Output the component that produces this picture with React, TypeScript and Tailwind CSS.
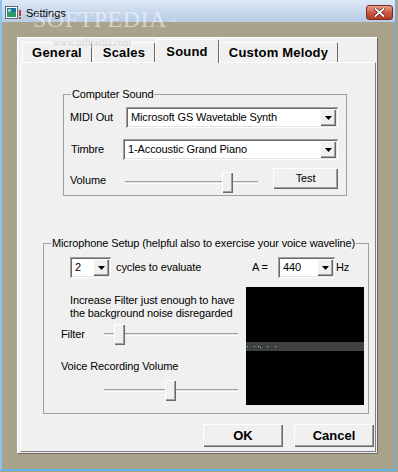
import React from 'react'

// win classic bevels
const raised = 'shadow-[inset_1px_1px_0_#ffffff,inset_-1px_-1px_0_#696969,inset_-2px_-2px_0_#a0a0a0]'
const sunken =
  'shadow-[inset_1px_1px_0_#a0a0a0,inset_-1px_-1px_0_#ffffff,inset_2px_2px_0_#696969,inset_-2px_-2px_0_#e3e3e3]'

function Combo({ value, className }: { value: string; className: string }) {
  return (
    <div className={`flex h-[21px] items-center bg-white p-[2px] ${sunken} ${className}`}>
      <span className="flex-1 truncate pl-[3px] leading-[13px]">{value}</span>
      <span className={`flex h-[17px] w-[16px] items-center justify-center bg-[#f0f0f0] ${raised}`}>
        <svg width="7" height="4" viewBox="0 0 7 4">
          <path d="M0 0h7L3.5 4z" fill="#000" />
        </svg>
      </span>
    </div>
  )
}

function Slider({ className, thumb }: { className: string; thumb: string }) {
  return (
    <div className={`relative h-[21px] ${className}`}>
      <div className="mt-[9px] h-[3px] border-t border-b border-t-[#a0a0a0] border-b-white bg-[#e3e3e3]" />
      <div className={`absolute top-0 h-[21px] w-[11px] bg-[#f0f0f0] ${raised} ${thumb}`} />
    </div>
  )
}

function Group({ label, className, children }: { label: string; className: string; children: React.ReactNode }) {
  return (
    <div className={`relative border border-[#a0a0a0] ${className}`}>
      <span className="absolute -top-[7px] left-[7px] bg-[#f0f0f0] px-[1px] leading-[13px] whitespace-nowrap">
        {label}
      </span>
      {children}
    </div>
  )
}

function Tab({ label, className, active = false }: { label: string; className: string; active?: boolean }) {
  return (
    <div
      className={`flex items-center justify-center rounded-t-[2px] border-t border-l border-r border-t-white border-l-white border-r-[#696969] bg-[#f0f0f0] text-[13px] font-bold tracking-[0.2px] ${
        active ? 'relative z-10 -mb-px h-[24px]' : 'h-[20px]'
      } ${className}`}
    >
      {label}
    </div>
  )
}

export default function App() {
  return (
    <div className="h-[472px] w-[398px] bg-[#aaa38c] font-['Liberation_Sans',Arial,sans-serif] text-[11px] tracking-[-0.12px] text-black">
      <div className="relative flex h-[471px] w-[396px] flex-col border-b-2 border-l-2 border-r border-b-[#62b4ea] border-l-[#8cc4ee] border-r-[#62b4ea]">
        {/* title bar */}
        <div className="flex h-[22px] items-start justify-between bg-gradient-to-b from-[#dde8f5] to-[#b7cbe4]">
          <div className="flex items-center pt-[6px] pl-[3px]">
            <svg width="18" height="14" viewBox="0 0 18 14">
              <rect x="0.5" y="0.5" width="12" height="12" fill="#fff" stroke="#5a6a7a" />
              <rect x="2" y="2" width="9" height="9" fill="#1f6f9f" />
              <rect x="2" y="6" width="9" height="5" fill="#2e9a6a" />
              <rect x="3" y="3" width="3" height="3" fill="#8fd0c0" />
              <rect x="14" y="4" width="2" height="6" fill="#c43c2c" />
              <rect x="14" y="11" width="2" height="2" fill="#c43c2c" />
            </svg>
            <span className="ml-[3px] text-[11px] leading-[13px] tracking-normal">Settings</span>
          </div>
          <div className="mt-[5px] mr-[2px] flex h-[15px] w-[27px] items-center justify-center rounded-[3px] border border-[#7a2a1e] bg-gradient-to-b from-[#e6a091] via-[#cf5a44] to-[#b53a26]">
            <svg width="11" height="9" viewBox="0 0 11 9">
              <path d="M1.5 1 9.5 8M9.5 1 1.5 8" stroke="#5a1c12" strokeWidth="3.2" strokeLinecap="square" />
              <path d="M1.5 1 9.5 8M9.5 1 1.5 8" stroke="#fff" strokeWidth="1.8" strokeLinecap="square" />
            </svg>
          </div>
        </div>

        {/* client area */}
        <div className="pt-[15px] pl-[15px]">
          <div className="flex h-[417px] w-[361px] flex-col border border-t-white border-l-white border-r-[#696969] border-b-[#696969] bg-[#f0f0f0] pt-[2px] pr-[1px] pb-[1px] pl-[2px]">
            <div className="flex h-[22px] items-end pl-[2px]">
              <Tab label="General" className="w-[70px]" />
              <Tab label="Scales" className="ml-[1px] w-[62px]" />
              <Tab label="Sound" className="w-[64px]" active />
              <Tab label="Custom Melody" className="w-[119px]" />
            </div>

            <div className="flex h-[390px] flex-col border border-t-white border-l-white border-r-[#808080] border-b-[#808080] bg-[#f0f0f0]">
              <Group label="Computer Sound" className="mt-[31px] ml-[42px] h-[102px] w-[284px]">
                <div className="mt-[12px] flex items-center pl-[6px]">
                  <span className="w-[56px] leading-[13px]">MIDI Out</span>
                  <Combo value="Microsoft GS Wavetable Synth" className="w-[212px]" />
                </div>
                <div className="mt-[11px] flex items-center pl-[7px]">
                  <span className="w-[52px] leading-[13px]">Timbre</span>
                  <Combo value="1-Accoustic Grand Piano" className="w-[215px]" />
                </div>
                <div className="mt-[8px] flex items-start pl-[6px]">
                  <span className="mt-[6px] w-[55px] leading-[13px]">Volume</span>
                  <Slider className="mt-[4px] w-[133px]" thumb="left-[97px]" />
                  <button className={`ml-[15px] h-[21px] w-[65px] bg-[#f0f0f0] text-[11px] ${raised}`}>Test</button>
                </div>
              </Group>

              <Group
                label="Microphone Setup (helpful also to exercise your voice waveline)"
                className="mt-[47px] ml-[22px] h-[171px] w-[326px]"
              >
                <div className="mt-[13px] flex items-center pl-[26px]">
                  <Combo value="2" className="w-[41px]" />
                  <span className="ml-[5px] w-[136px] leading-[13px]">cycles to evaluate</span>
                  <span className="w-[26px] leading-[13px]">A =</span>
                  <Combo value="440" className="w-[57px]" />
                  <span className="ml-[1px] leading-[13px]">Hz</span>
                </div>
                <div className="flex">
                  <div className="flex flex-1 flex-col">
                    <p className="mt-[16px] pl-[26px] leading-[13px]">
                      Increase Filter just enough to have
                      <br />
                      the background noise disregarded
                    </p>
                    <div className="mt-[4px] flex items-center pl-[17px]">
                      <span className="w-[43px] leading-[13px]">Filter</span>
                      <Slider className="w-[134px]" thumb="left-[10px]" />
                    </div>
                    <span className="mt-[15px] pl-[17px] leading-[13px]">Voice Recording Volume</span>
                    <Slider className="mt-[7px] ml-[60px] w-[134px]" thumb="left-[61px]" />
                  </div>
                  <div className="mt-[9px] mr-[4px] h-[118px] w-[118px] bg-black">
                    <svg width="118" height="118" viewBox="0 0 118 118">
                      <rect x="0" y="55" width="118" height="9" fill="#404040" />
                      <g fill="#3ff0f0">
                        <rect x="1" y="59" width="1" height="1" />
                        <rect x="8" y="59" width="1" height="1" />
                        <rect x="12" y="59" width="1" height="1" />
                        <rect x="14" y="60" width="1" height="1" />
                        <rect x="21" y="59" width="1" height="1" />
                        <rect x="29" y="59" width="1" height="1" />
                      </g>
                    </svg>
                  </div>
                </div>
              </Group>

              <div className="mt-[10px] flex justify-end gap-[11px] pr-[1px]">
                <button className={`h-[23px] w-[80px] bg-[#f0f0f0] text-[13px] font-bold tracking-normal ${raised}`}>OK</button>
                <button className={`h-[23px] w-[80px] bg-[#f0f0f0] text-[13px] font-bold tracking-normal ${raised}`}>
                  Cancel
                </button>
              </div>
            </div>
          </div>
        </div>

        {/* watermarks over the window */}
        <span className="pointer-events-none absolute top-[7px] left-[31px] font-['Liberation_Serif',serif] text-[24px] leading-[24px] tracking-[0.5px] text-white/50">
          SOFTPEDIA
          <sup className="ml-[2px] text-[7px]">™</sup>
        </span>
        <span className="pointer-events-none absolute top-[38px] left-[51px] font-['Liberation_Serif',serif] text-[10px] leading-[10px] text-[#c9c9c9]/80">
          www.softpedia.com
        </span>
      </div>
    </div>
  )
}
